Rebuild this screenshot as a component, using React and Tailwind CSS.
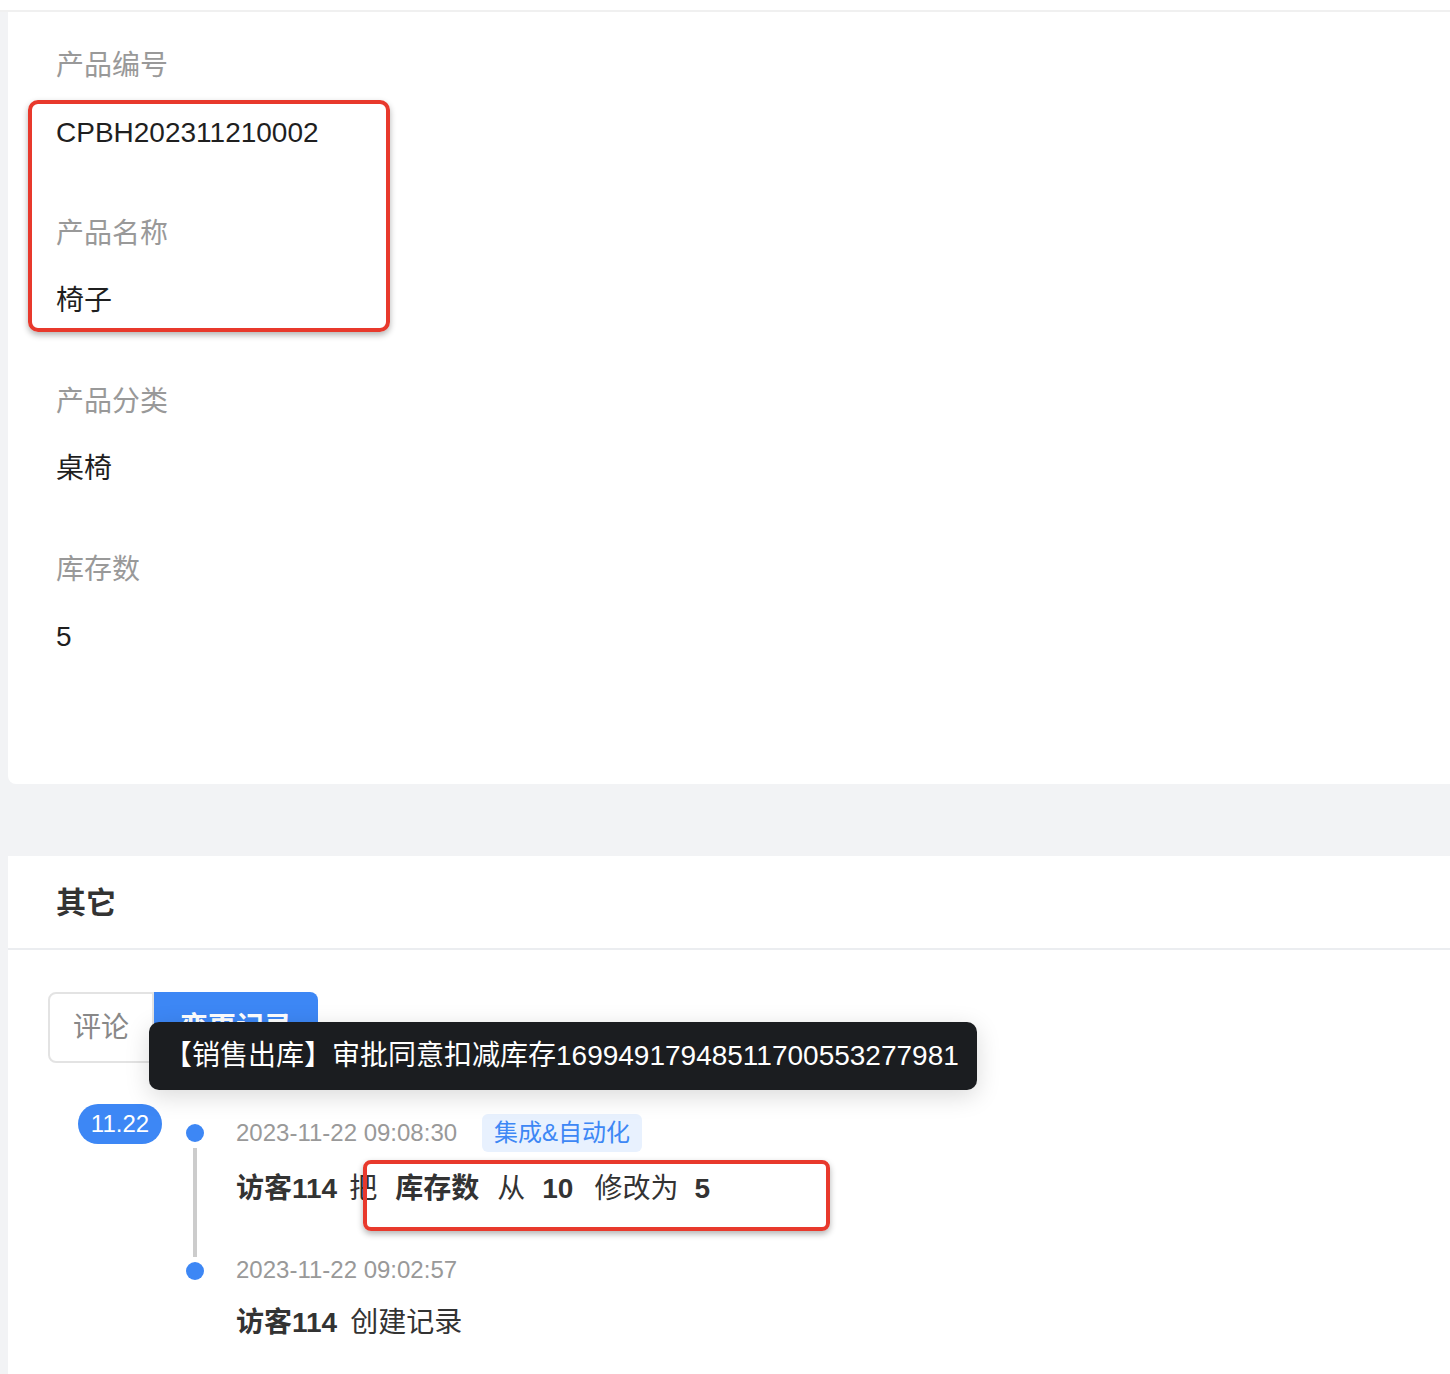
import React from "react";

const FONT = "font-['Liberation_Sans','Noto_Sans_CJK_SC',sans-serif]";

function Field({ label, value }) {
  return (
    <div className="mb-[61px]">
      <div className="text-[28px] leading-[40px] text-[#999999]">{label}</div>
      <div className="mt-[27px] text-[28px] leading-[40px] text-[#1f1f1f]">{value}</div>
    </div>
  );
}

export default function App() {
  return (
    <div className={`min-h-[1374px] bg-[#f2f3f5] ${FONT} flex flex-col`}>
      <div className="h-[12px] bg-white border-b-2 border-[#f0f0f0]" />
      <div className="pl-[8px] flex flex-col flex-1">
        {/* Card 1 */}
        <div className="relative bg-white rounded-bl-[8px] pt-[34px] pl-[48px] pb-[66px]">
          <Field label="产品编号" value="CPBH202311210002" />
          <Field label="产品名称" value="椅子" />
          <Field label="产品分类" value="桌椅" />
          <Field label="库存数" value="5" />
          <div className="absolute left-[20px] top-[88px] w-[362px] h-[232px] border-4 border-[#e8392c] rounded-[10px] shadow-[0_3px_6px_rgba(0,0,0,0.3)]" />
        </div>

        <div className="h-[72px]" />

        {/* Card 2 */}
        <div className="relative bg-white flex-1">
          <div className="h-[94px] flex items-center pl-[48px] border-b-2 border-[#ebedf0]">
            <span className="text-[30px] font-bold text-[#333333]">其它</span>
          </div>

          <div className="pt-[42px] pl-[40px]">
            <div className="flex h-[71px]">
              <div className="w-[106px] border-2 border-[#e3e3e3] rounded-l-[8px] flex items-center justify-center text-[28px] text-[#888888]">
                评论
              </div>
              <div className="w-[164px] bg-[#3d87f5] rounded-r-[8px] flex items-center justify-center text-[28px] font-bold text-white">
                变更记录
              </div>
            </div>
          </div>

          <div className="flex pl-[70px] pt-[41px]">
            <div className="w-[84px] h-[40px] rounded-full bg-[#3d87f5] text-white text-[24px] flex items-center justify-center shrink-0">
              11.22
            </div>
            <div className="ml-[24px] pt-[10px]">
              {/* item 1 */}
              <div className="flex pb-[42px]">
                <div className="w-[18px] flex flex-col items-center">
                  <div className="mt-[10px] w-[18px] h-[18px] rounded-full bg-[#3d87f5]" />
                  <div className="mt-[6px] w-[4px] flex-1 bg-[#cccccc] -mb-[48px]" />
                </div>
                <div className="ml-[32px]">
                  <div className="h-[38px] flex items-center">
                    <span className="text-[24px] text-[#999999]">2023-11-22 09:08:30</span>
                    <span className="ml-[25px] h-[38px] px-[12px] rounded-[6px] bg-[#e8f1fe] text-[#3d87f5] text-[24px] flex items-center">
                      集成&amp;自动化
                    </span>
                  </div>
                  <div className="mt-[17px] h-[40px] flex items-center text-[28px] text-[#333333]">
                    <span className="font-bold">访客114</span>
                    <span className="ml-[12px]">把</span>
                    <span className="ml-[18px] font-bold">库存数</span>
                    <span className="ml-[18px]">从</span>
                    <span className="ml-[17px] font-bold">10</span>
                    <span className="ml-[21px]">修改为</span>
                    <span className="ml-[16px] font-bold">5</span>
                  </div>
                </div>
              </div>
              {/* item 2 */}
              <div className="flex relative">
                <div className="w-[18px] flex flex-col items-center relative z-10">
                  <div className="mt-[11px] w-[18px] h-[18px] rounded-full bg-[#3d87f5]" />
                </div>
                <div className="ml-[32px]">
                  <div className="h-[38px] flex items-center">
                    <span className="text-[24px] text-[#999999]">2023-11-22 09:02:57</span>
                  </div>
                  <div className="mt-[14px] h-[40px] flex items-center text-[28px] text-[#333333]">
                    <span className="font-bold">访客114</span>
                    <span className="ml-[13px]">创建记录</span>
                  </div>
                </div>
              </div>
            </div>
          </div>

          {/* tooltip */}
          <div className="absolute left-[141px] top-[166px] h-[68px] pl-[15px] pr-[18px] rounded-[10px] bg-[#1b1d20] text-white text-[28px] flex items-center whitespace-nowrap shadow-[0_6px_24px_rgba(0,0,0,0.15)]">
            【销售出库】审批同意扣减库存16994917948511700553277981
          </div>

          {/* annotation box */}
          <div className="absolute left-[355px] top-[304px] w-[467px] h-[71px] border-4 border-[#e8392c] rounded-[8px] shadow-[0_3px_6px_rgba(0,0,0,0.3)]" />
        </div>
      </div>
    </div>
  );
}
